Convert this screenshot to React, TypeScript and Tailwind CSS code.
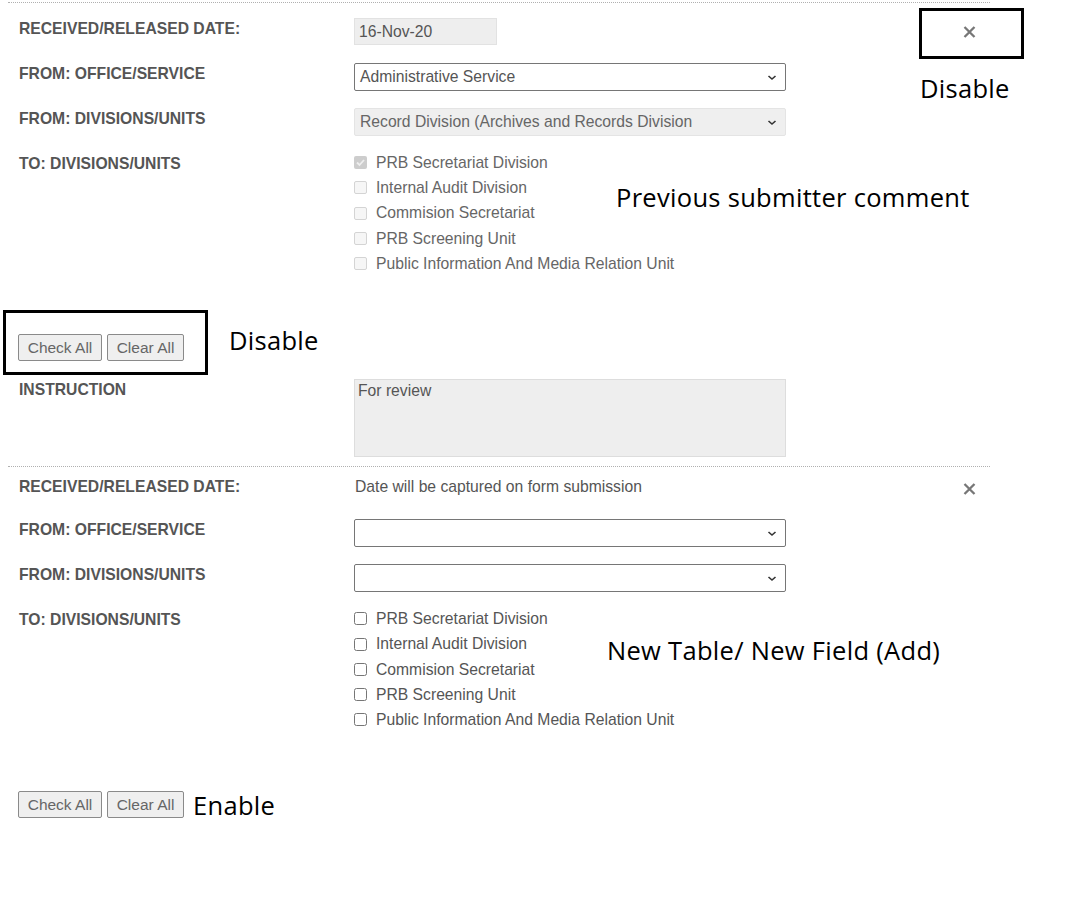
import React from "react";

const XIcon = () => (
  <svg width="13" height="12" viewBox="0 0 13 12" className="block">
    <path d="M1.5 1 L11.5 11 M11.5 1 L1.5 11" stroke="#777" strokeWidth="2.3" strokeLinecap="butt" />
  </svg>
);

const Chevron = () => (
  <svg width="10" height="7" viewBox="0 0 10 7" className="block">
    <path d="M1.5 2 L5 5 L8.5 2" stroke="#333" strokeWidth="1.6" fill="none" />
  </svg>
);

const Label = ({ children, className = "" }: { children: React.ReactNode; className?: string }) => (
  <div className={"w-[346px] shrink-0 pl-[11px] text-[15.7px] leading-[16px] font-bold text-[#555] " + className}>
    {children}
  </div>
);

const Select = ({ value, disabled }: { value: string; disabled?: boolean }) => (
  <div
    className={
      disabled
        ? "w-[432px] h-[28px] flex items-center justify-between pl-[5px] pr-[8px] rounded-[2px] border border-[#e4e4e4] bg-[#efefef] text-[#666] text-[15.7px]"
        : "w-[432px] h-[28px] flex items-center justify-between pl-[5px] pr-[8px] rounded-[2px] border border-[#767676] bg-white text-[#555] text-[15.7px]"
    }
  >
    <span>{value}</span>
    <Chevron />
  </div>
);

const Box = ({ state }: { state: "dc" | "du" | "e" }) => {
  if (state === "dc")
    return (
      <div className="w-[13px] h-[13px] rounded-[2px] bg-[#cdcdcd] flex items-center justify-center">
        <svg width="11" height="11" viewBox="0 0 11 11">
          <path d="M2 5.5 L4.5 8 L9 3" stroke="#eeeeee" strokeWidth="1.8" fill="none" />
        </svg>
      </div>
    );
  if (state === "du")
    return <div className="w-[13px] h-[13px] rounded-[2px] border border-[#d4d4d4] bg-[#f6f6f6]" />;
  return <div className="w-[13px] h-[13px] rounded-[2.5px] border border-[#767676] bg-white" />;
};

const items = [
  "PRB Secretariat Division",
  "Internal Audit Division",
  "Commision Secretariat",
  "PRB Screening Unit",
  "Public Information And Media Relation Unit",
];

const CheckList = ({ disabled }: { disabled?: boolean }) => (
  <div className="flex flex-col">
    {items.map((t, i) => (
      <div key={t} className="h-[25.25px] flex items-center">
        <Box state={disabled ? (i === 0 ? "dc" : "du") : "e"} />
        <span className={disabled ? "ml-[9px] text-[15.7px] text-[#666]" : "ml-[9px] text-[15.7px] text-[#555]"}>{t}</span>
      </div>
    ))}
  </div>
);

const Btn = ({ children, w }: { children: React.ReactNode; w: string }) => (
  <div
    className={
      "h-[27px] flex items-center justify-center rounded-[2px] border border-[#8a8a8a] bg-[#efefef] text-[15.5px] text-[#666] " + w
    }
  >
    {children}
  </div>
);

const note = "font-['Open_Sans',sans-serif] text-[25.5px] tracking-[0.3px] leading-[30px] text-black";

export default function App() {
  return (
    <div className="relative w-[1066px] h-[922px] bg-white overflow-hidden font-['Liberation_Sans',Arial,sans-serif]">
      {/* Section 1 */}
      <div className="ml-2 mt-[2px] w-[982px] border-t border-dotted border-[#b0b0b0]">
        <div className="mt-[15px] flex items-start">
          <Label className="pt-[3px]">RECEIVED/RELEASED DATE:</Label>
          <div className="w-[143px] h-[27px] bg-[#eeeeee] border border-[#e2e2e2] pl-[4px] text-[15.7px] leading-[25px] text-[#555]">
            16-Nov-20
          </div>
          <div className="ml-auto mr-[14px] mt-[8px]">
            <XIcon />
          </div>
        </div>
        <div className="mt-[18px] flex items-start">
          <Label className="pt-[3px]">FROM: OFFICE/SERVICE</Label>
          <Select value="Administrative Service" />
        </div>
        <div className="mt-[17px] flex items-start">
          <Label className="pt-[3px]">FROM: DIVISIONS/UNITS</Label>
          <Select value="Record Division (Archives and Records Division" disabled />
        </div>
        <div className="mt-[14px] flex items-start">
          <Label className="pt-[6px]">TO: DIVISIONS/UNITS</Label>
          <CheckList disabled />
        </div>
        <div className="mt-[58px] pl-[10px] flex gap-[5px]">
          <Btn w="w-[84px]">Check All</Btn>
          <Btn w="w-[77px]">Clear All</Btn>
        </div>
        <div className="mt-[18px] flex items-start">
          <Label className="pt-[3px]">INSTRUCTION</Label>
          <div className="w-[432px] h-[78px] bg-[#eeeeee] border border-[#dddddd] pl-[3px] pt-[2px] text-[15.7px] leading-[18px] text-[#555]">
            For review
          </div>
        </div>
      </div>

      {/* Section 2 */}
      <div className="ml-2 mt-[9px] w-[982px] border-t border-dotted border-[#b0b0b0]">
        <div className="mt-[11px] flex items-start">
          <Label className="pt-[1px]">RECEIVED/RELEASED DATE:</Label>
          <div className="pl-[1px] text-[15.7px] leading-[18px] text-[#555]">Date will be captured on form submission</div>
          <div className="ml-auto mr-[14px] mt-[5px]">
            <XIcon />
          </div>
        </div>
        <div className="mt-[23px] flex items-start">
          <Label className="pt-[3px]">FROM: OFFICE/SERVICE</Label>
          <Select value="" />
        </div>
        <div className="mt-[17px] flex items-start">
          <Label className="pt-[3px]">FROM: DIVISIONS/UNITS</Label>
          <Select value="" />
        </div>
        <div className="mt-[14px] flex items-start">
          <Label className="pt-[6px]">TO: DIVISIONS/UNITS</Label>
          <CheckList />
        </div>
        <div className="mt-[57px] pl-[10px] flex items-center gap-[5px]">
          <Btn w="w-[84px]">Check All</Btn>
          <Btn w="w-[77px]">Clear All</Btn>
          <span className={"ml-[4px] " + note}>Enable</span>
        </div>
      </div>

      {/* Annotations */}
      <div className="absolute left-[919px] top-[8px] w-[105px] h-[51px] border-[3px] border-black" />
      <div className={"absolute left-[920px] top-[73px] " + note}>Disable</div>
      <div className={"absolute left-[616px] top-[182px] " + note}>Previous submitter comment</div>
      <div className="absolute left-[3px] top-[310px] w-[205px] h-[65px] border-[3px] border-black" />
      <div className={"absolute left-[229px] top-[325px] " + note}>Disable</div>
      <div className={"absolute left-[607px] top-[635px] " + note}>New Table/ New Field (Add)</div>
    </div>
  );
}
